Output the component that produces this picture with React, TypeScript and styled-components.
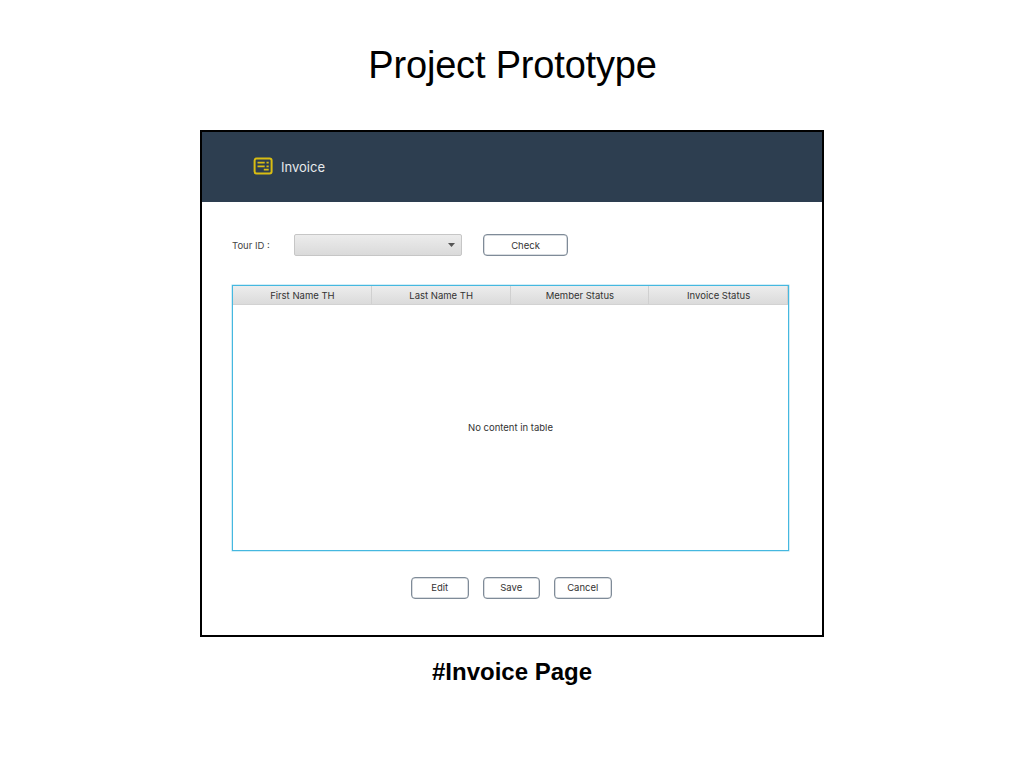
import React from "react";
import styled, { createGlobalStyle } from "styled-components";

const GlobalStyle = createGlobalStyle`
  * { box-sizing: border-box; }
  body { margin: 0; background: #fff; }
`;

const Slide = styled.main`
  width: 1024px;
  height: 768px;
  display: flex;
  flex-direction: column;
  align-items: center;
  overflow: hidden;
  background: #fff;
  color: #000;
  font-family: "Liberation Sans", Arial, sans-serif;
`;

const Title = styled.h1`
  margin: 43px 0 43px;
  height: 44px;
  line-height: 45px;
  padding-left: 1px;
  font-size: 38px;
  font-weight: 400;
  letter-spacing: -0.18px;
`;

const Caption = styled.h2`
  margin: 21px 0 0;
  line-height: 28px;
  font-size: 24px;
  font-weight: 700;
`;

const Window = styled.section`
  width: 624px;
  height: 507px;
  border: 2px solid #000;
  display: flex;
  flex-direction: column;
  font-family: Inter, sans-serif;
  font-size: 9.5px;
  color: #333;
`;

const Header = styled.header`
  height: 70px;
  flex: none;
  display: flex;
  align-items: center;
  gap: 8px;
  padding: 0 0 2px 51px;
  background: #2d3e50;
  color: #e6e9ec;
  font-size: 13px;
`;

const HeaderTitle = styled.span`
  padding-top: 2px;
`;

const Content = styled.div`
  display: flex;
  flex-direction: column;
  padding: 32px 33px 0 30px;
`;

const Filter = styled.div`
  display: flex;
  align-items: center;
  height: 22px;
`;

const Label = styled.label`
  width: 62px;
  color: #444;
`;

const Select = styled.div`
  width: 168px;
  height: 22px;
  margin-right: 21px;
  padding-right: 6px;
  display: flex;
  align-items: center;
  justify-content: flex-end;
  border: 1px solid #c6c6c6;
  border-radius: 2px;
  background: linear-gradient(#ececec, #dadada);
`;

const Button = styled.button<{ $width: number; $lift?: number }>`
  width: ${(p) => p.$width}px;
  height: 22px;
  padding: 0 0 ${(p) => p.$lift ?? 0}px;
  border: 1px solid #7f8b98;
  box-shadow: inset 0 0 0 0.5px #b4bbc3;
  border-radius: 4px;
  background: #fff;
  color: #333;
  font: inherit;
`;

const Table = styled.div`
  height: 266px;
  margin-top: 29px;
  display: flex;
  flex-direction: column;
  border: 1px solid #45b8e0;
  box-shadow: 0 0 0 0.5px #a7dcef;
`;

const Columns = styled.div`
  display: grid;
  grid-template-columns: repeat(4, 1fr);
  height: 19px;
  flex: none;
  border-bottom: 1px solid #d2d2d2;
  background: linear-gradient(#ededed, #dbdbdb);
`;

const Column = styled.div`
  display: flex;
  align-items: center;
  justify-content: center;
  padding: 1px 0 0 1px;
  border-right: 1px solid #d0d0d0;
`;

const Placeholder = styled.div`
  flex: 1;
  display: flex;
  align-items: center;
  justify-content: center;
`;

const Actions = styled.div`
  display: flex;
  gap: 14px;
  margin: 26px 0 0 179px;
`;

const InvoiceIcon = () => (
  <svg width="20" height="18" viewBox="0 0 20 18" fill="none" stroke="#d9bd12">
    <rect x="1.6" y="1.4" width="17" height="15" rx="2" strokeWidth="2" />
    <path d="M4.5 5.6h7.2M4.5 9.3h7.2M13.5 5.6h2.2M13.5 9.3h2.2M10.8 12.6h4.9" strokeWidth="1.8" />
  </svg>
);

const columns = ["First Name TH", "Last Name TH", "Member Status", "Invoice Status"];
const actions = ["Edit", "Save", "Cancel"];

export default function App() {
  return (
    <>
      <GlobalStyle />
      <Slide>
        <Title>Project Prototype</Title>
        <Window>
          <Header>
            <InvoiceIcon />
            <HeaderTitle>Invoice</HeaderTitle>
          </Header>
          <Content>
            <Filter>
              <Label>Tour ID :</Label>
              <Select>
                <svg width="7" height="4" viewBox="0 0 7 4">
                  <path d="M0 0h7L3.5 4z" fill="#555" />
                </svg>
              </Select>
              <Button $width={85}>Check</Button>
            </Filter>
            <Table>
              <Columns>
                {columns.map((name) => (
                  <Column key={name}>{name}</Column>
                ))}
              </Columns>
              <Placeholder>No content in table</Placeholder>
            </Table>
            <Actions>
              {actions.map((name) => (
                <Button key={name} $width={57.5} $lift={1}>{name}</Button>
              ))}
            </Actions>
          </Content>
        </Window>
        <Caption>#Invoice Page</Caption>
      </Slide>
    </>
  );
}
